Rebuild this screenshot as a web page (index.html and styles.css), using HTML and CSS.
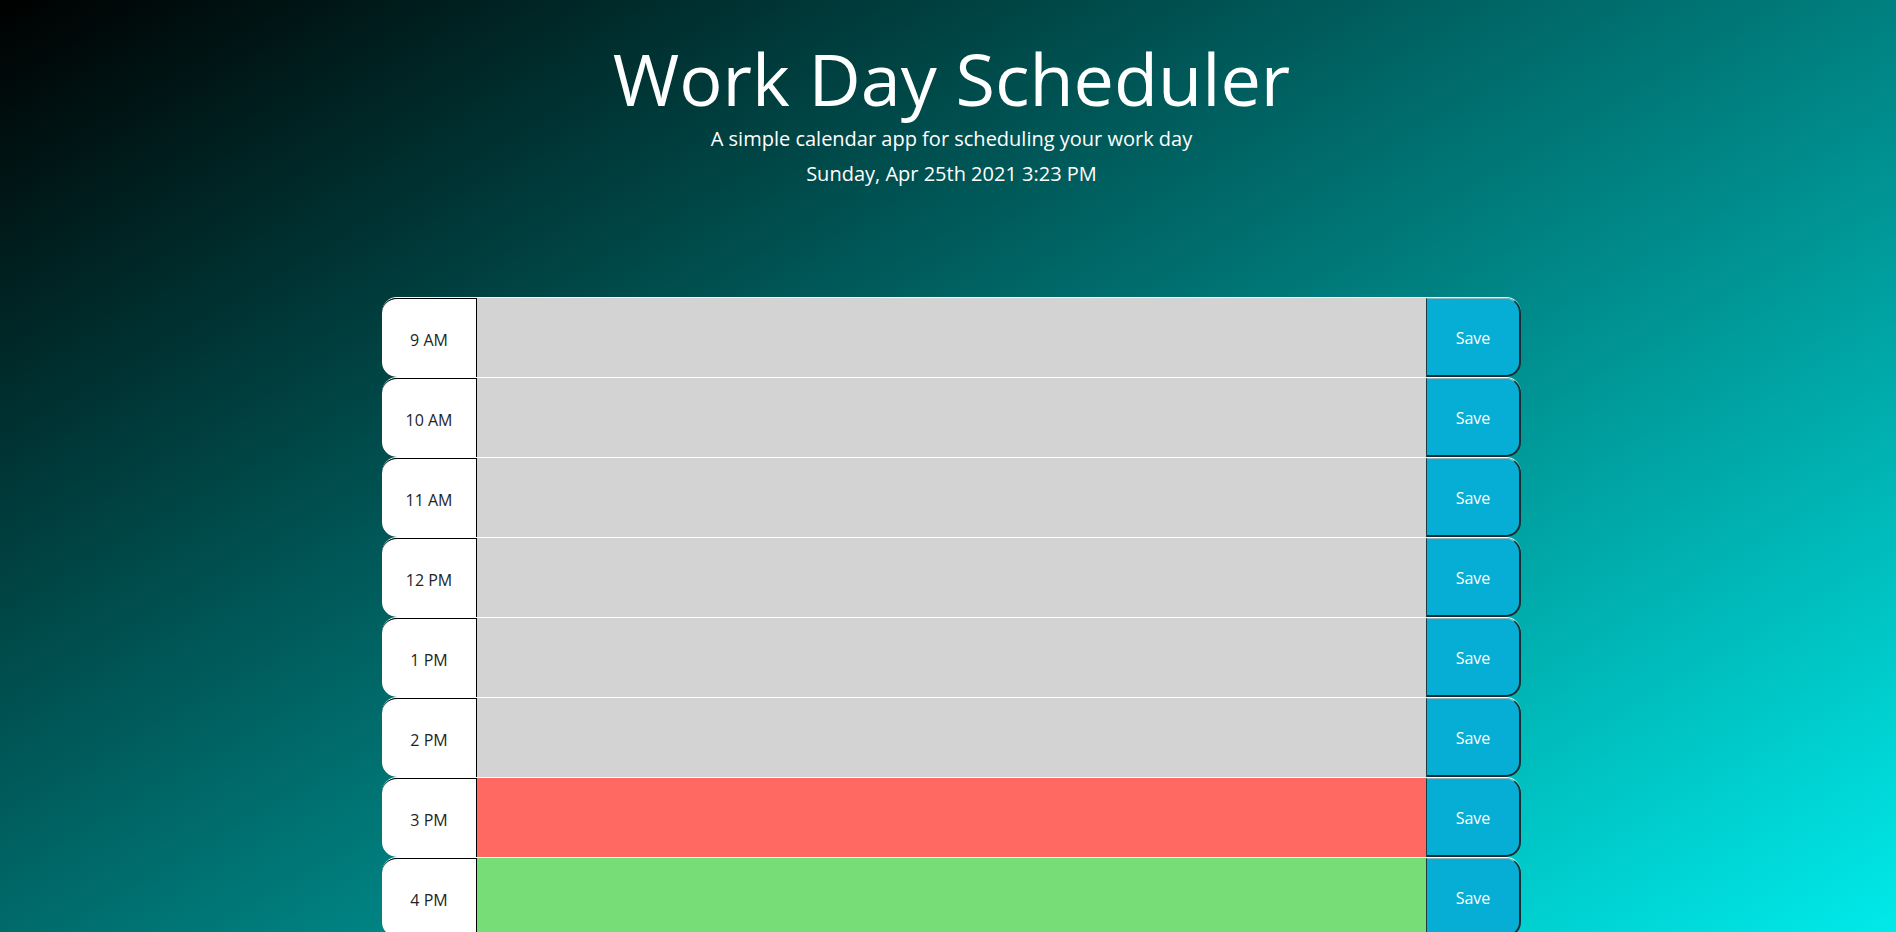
FILE: index.html
```html
<!DOCTYPE html>
<html lang="en">
<head>
<meta charset="utf-8">
<title>Work Day Scheduler</title>
<link rel="stylesheet" href="styles.css">
</head>
<body>
<header class="jumbotron">
  <h1 class="title">Work Day Scheduler</h1>
  <p class="lead">A simple calendar app for scheduling your work day</p>
  <p class="lead current-day">Sunday, Apr 25th 2021 3:23 PM</p>
</header>
<main class="container">
  <div class="row">
    <div class="hour">9 AM</div>
    <textarea class="description past"></textarea>
    <button class="save-btn">Save</button>
  </div>
  <div class="row">
    <div class="hour">10 AM</div>
    <textarea class="description past"></textarea>
    <button class="save-btn">Save</button>
  </div>
  <div class="row">
    <div class="hour">11 AM</div>
    <textarea class="description past"></textarea>
    <button class="save-btn">Save</button>
  </div>
  <div class="row">
    <div class="hour">12 PM</div>
    <textarea class="description past"></textarea>
    <button class="save-btn">Save</button>
  </div>
  <div class="row">
    <div class="hour">1 PM</div>
    <textarea class="description past"></textarea>
    <button class="save-btn">Save</button>
  </div>
  <div class="row">
    <div class="hour">2 PM</div>
    <textarea class="description past"></textarea>
    <button class="save-btn">Save</button>
  </div>
  <div class="row">
    <div class="hour">3 PM</div>
    <textarea class="description present"></textarea>
    <button class="save-btn">Save</button>
  </div>
  <div class="row">
    <div class="hour">4 PM</div>
    <textarea class="description future"></textarea>
    <button class="save-btn">Save</button>
  </div>
  <div class="row">
    <div class="hour">5 PM</div>
    <textarea class="description future"></textarea>
    <button class="save-btn">Save</button>
  </div>
</main>
</body>
</html>
```
FILE: styles.css
```css
html {
  min-height: 100%;
  background: linear-gradient(to bottom right, #000000, #00ffff);
}

body {
  margin: 0;
  padding-bottom: 100px;
  font-family: "Open Sans", "Noto Sans", sans-serif;
  font-size: 16px;
  color: #212529;
}

.jumbotron {
  display: flex;
  flex-direction: column;
  align-items: center;
  padding-top: 35px;
  padding-bottom: 108px;
  padding-left: 7px;
  color: #ffffff;
  text-align: center;
}

.title {
  margin: 0 0 3px 0;
  font-size: 72px;
  font-weight: 400;
  line-height: 86px;
}

.lead {
  margin: 0 0 5px 0;
  font-size: 20px;
  font-weight: 400;
  line-height: 30px;
}

.current-day {
  margin: 0;
}

.container {
  width: 1139px;
  margin: 0 auto;
  padding-left: 7px;
}

.row {
  display: flex;
  height: 80px;
  box-sizing: border-box;
  border-top: 1px solid #ffffff;
  border-radius: 15px;
}

.hour {
  width: 95px;
  box-sizing: border-box;
  display: flex;
  align-items: center;
  justify-content: center;
  background: #ffffff;
  color: #212529;
  border-top: 1px solid #000000;
  border-right: 1px solid #000000;
  border-radius: 15px 0 0 15px;
  font-size: 16px;
  padding-top: 3px;
}

.description {
  flex: 1;
  margin: 0;
  padding: 6px 10px;
  border: none;
  outline: none;
  resize: none;
  font-family: inherit;
  font-size: 16px;
  color: #ffffff;
}

.past {
  background: #d3d3d3;
}

.present {
  background: #ff6961;
}

.future {
  background: #77dd77;
}

.save-btn {
  width: 95px;
  margin: 0;
  padding: 2px 0 0 0;
  box-sizing: border-box;
  background: #06aed5;
  color: #ffffff;
  font-family: inherit;
  font-size: 16px;
  border-top: 1px solid #8fb3bb;
  border-left: 1px solid #1f3b42;
  border-right: 2px solid #1a2c31;
  border-bottom: 2px solid #1a2c31;
  border-radius: 0 15px 15px 0;
}
```
